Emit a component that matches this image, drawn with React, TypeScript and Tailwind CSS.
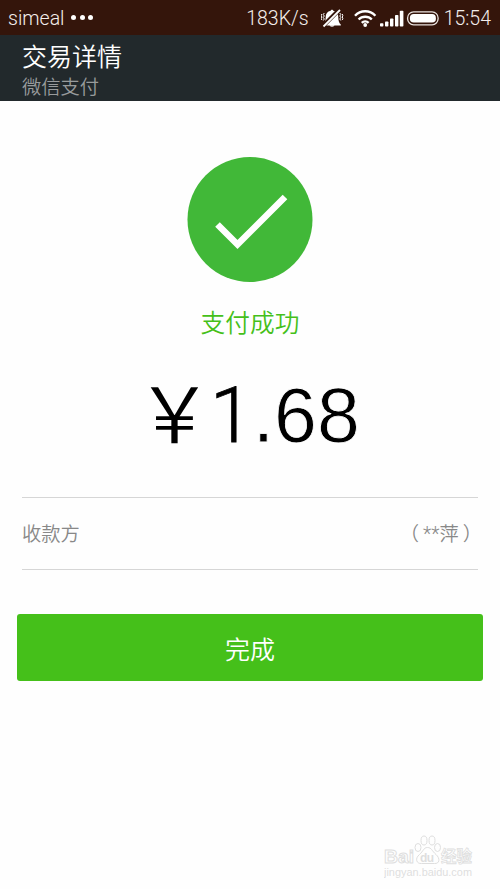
import React from 'react';

const StatusIcons: React.FC = () => (
  <svg width="121" height="24" viewBox="0 0 121 24" fill="none" className="mr-[2px] shrink-0">
    {/* Muted bell */}
    <g fill="#fff">
      <path d="M11 3.700c.7 0 1.200.4 1.300 1.100 3.400.7 5 3.200 5 6.200c0 4 .7 5.700 2.500 7.500v1h-17.600v-1c1.800-1.800 2.500-3.500 2.500-7.500c0-3 1.600-5.500 5-6.200c.1-.7.600-1.100 1.300-1.100z" />
      <path d="M8.500 19.300h5a2.500 1.400 0 0 1-5 0z" />
    </g>
    <path d="M1.500 20.500L18.500 3.500" stroke="#34150b" strokeWidth="4.200" />
    <path d="M2.500 20.500L19 4" stroke="#fff" strokeWidth="1.800" />
    <path d="M3.300 7l-1 1.500 1 1.500-1 1.500 1 1.500-1 1.500M.8 8l-.5 1.500.5 1.500-.5 1.500.5 1.500M18.800 7l1 1.500-1 1.500 1 1.500-1 1.500 1 1.500M21.300 8l.5 1.500-.5 1.500.5 1.500-.5 1.500" stroke="#fff" strokeWidth="1" />
    {/* Wifi */}
    <g stroke="#fff" strokeWidth="2.400">
      <path d="M34 9.700a14 14 0 0 1 20.400 0" />
      <path d="M37.600 13.500a9.200 9.200 0 0 1 13.200 0" />
      <path d="M40.800 16.800a4.800 4.800 0 0 1 6.800 0" />
    </g>
    <circle cx="44.200" cy="19" r="1.900" fill="#fff" />
    {/* Signal */}
    <g fill="#fff">
      <rect x="59" y="17.300" width="3.400" height="3.200" rx=".8" />
      <rect x="64" y="15.500" width="3.400" height="5" rx=".8" />
      <rect x="69" y="12.500" width="3.400" height="8" rx=".8" />
      <rect x="74" y="9" width="3.400" height="11.500" rx=".8" />
      <rect x="78.800" y="4.800" width="3.600" height="15.700" rx=".8" />
    </g>
    {/* Battery */}
    <rect x="86.600" y="5.900" width="30.500" height="12.900" rx="6" stroke="#e9e2df" strokeWidth="1.300" />
    <rect x="88.900" y="8.100" width="26" height="8.500" rx="3.800" fill="#fff" />
  </svg>
);

const StatusBar: React.FC = () => (
  <div className="flex h-[35px] items-center bg-[#34150b] pl-2 pr-[9px] font-['Roboto',sans-serif] text-[19.5px] text-[#f4eeec]">
    <span className="pt-[3px]">simeal</span>
    <span className="ml-[7px] flex gap-[3.5px]">
      <i className="size-[5px] rounded-full bg-white" />
      <i className="size-[5px] rounded-full bg-white" />
      <i className="size-[5px] rounded-full bg-white" />
    </span>
    <span className="ml-auto mr-3 pt-[3px]">183K/s</span>
    <StatusIcons />
    <span className="pt-[3px]">15:54</span>
  </div>
);

const Header: React.FC = () => (
  <header className="h-[66px] bg-[#22292c] pl-[22px] pt-1.5">
    <h1 className="text-[25px] leading-[34px] text-white">交易详情</h1>
    <p className="text-[19.3px] leading-[25px] text-[#989b9c]">微信支付</p>
  </header>
);

const Watermark: React.FC = () => (
  <svg width="92" height="46" viewBox="0 0 92 46" className="mb-[9px] mr-6 ml-auto mt-auto" fill="none" stroke="#dedede">
    <g fontFamily="Liberation Sans, Noto Sans CJK SC, sans-serif" fontWeight="bold">
      <text x="0" y="28.500" fontSize="19" textLength="30" lengthAdjust="spacingAndGlyphs" fill="#fff">Bai</text>
      <text x="57" y="27.500" fontSize="15.500" textLength="31" fill="#fff" strokeWidth=".8">经验</text>
      <text x="36" y="28" fontSize="12" textLength="14" fill="#dedede" stroke="none">du</text>
    </g>
    <ellipse cx="34" cy="13.500" rx="3" ry="4" />
    <ellipse cx="40" cy="6.500" rx="3" ry="4.500" />
    <ellipse cx="48" cy="6.500" rx="3" ry="4.500" />
    <ellipse cx="53.500" cy="13.500" rx="3" ry="4" />
    <path d="M43.500 13.500c-4 0-4 3.500-8 7-5 4-3 9.500 2 9h13c5 .5 6-5 1.500-9-4-3.500-4.500-7-8.500-7z" />
    <text x="0" y="42" fontSize="10" textLength="88" lengthAdjust="spacingAndGlyphs" fontFamily="Liberation Sans, sans-serif" fill="#dedede" stroke="none">jingyan.baidu.com</text>
  </svg>
);

const App: React.FC = () => {
  return (
    <div className="flex h-[889px] w-[500px] flex-col bg-[#fefefe] font-['Roboto','Noto_Sans_CJK_SC',sans-serif] font-[350]">
      <StatusBar />
      <Header />

      <main className="flex flex-1 flex-col">
        {/* Success mark */}
        <svg width="126" height="126" viewBox="0 0 126 126" className="mx-auto mt-[55px]">
          <circle cx="63" cy="63.500" r="62.500" fill="#41b838" />
          <path d="M30.500 68.500L50.500 88.500L98 41" fill="none" stroke="#fff" strokeWidth="6.500" />
        </svg>
        <p className="mt-6 text-center text-[24.7px] leading-9 text-[#45c01a]">支付成功</p>

        {/* Amount */}
        <div className="mt-7 flex h-[92px] items-center pl-[136px] text-[77px] text-black">
          <span className="w-[74px] pb-3 font-['Noto_Sans_CJK_SC',sans-serif]">￥</span>
          <span className="font-['Liberation_Sans',sans-serif] [-webkit-text-stroke:0.8px_#fefefe]">
            <span className="font-['Roboto',sans-serif] font-light [-webkit-text-stroke:0.8px_#000]">1</span>.68
          </span>
        </div>

        {/* Payee */}
        <div className="mx-[22px] mt-[35px] flex h-[73px] items-center justify-between border-y border-[#d6d6d6] pt-1 text-[19.3px] text-[#888]">
          <span>收款方</span>
          <span className="flex">
            <span className="-ml-1 mr-1">（</span>
            <span>**萍</span>
            <span className="ml-1 -mr-1">）</span>
          </span>
        </div>

        <button className="mx-[17px] mt-[44px] h-[67px] rounded-[3px] bg-[#45c01a] pt-1.5 text-[25px] text-white">
          完成
        </button>

        <Watermark />
      </main>
    </div>
  );
};

export default App;
